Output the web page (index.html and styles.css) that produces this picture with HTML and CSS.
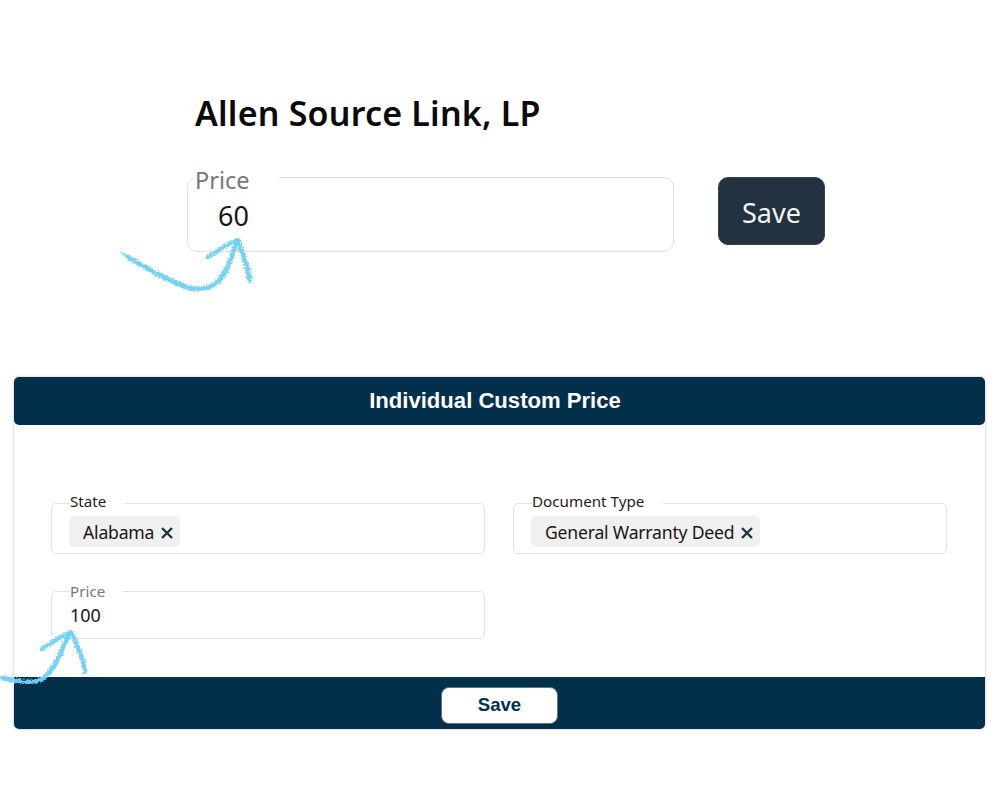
FILE: index.html
```html
<!DOCTYPE html>
<html lang="en">
<head>
<meta charset="utf-8">
<title>Custom Price</title>
<link rel="stylesheet" href="styles.css">
</head>
<body>
<div class="page">
  <section class="top">
    <h1 class="company">Allen Source Link, LP</h1>
    <div class="top-row">
      <fieldset class="big-field">
        <legend class="big-legend">Price</legend>
        <span class="big-value">60</span>
      </fieldset>
      <button class="big-save" type="button">Save</button>
    </div>
  </section>
  <section class="card">
    <header class="card-head">Individual Custom Price</header>
    <div class="card-body">
      <fieldset class="field">
        <legend class="legend">State</legend>
        <span class="chip">Alabama
          <svg class="chip-x" viewBox="0 0 12 12"><path d="M1 1L11 11M11 1L1 11"/></svg>
        </span>
      </fieldset>
      <fieldset class="field">
        <legend class="legend">Document Type</legend>
        <span class="chip">General Warranty Deed
          <svg class="chip-x" viewBox="0 0 12 12"><path d="M1 1L11 11M11 1L1 11"/></svg>
        </span>
      </fieldset>
      <fieldset class="field price-field">
        <legend class="legend muted">Price</legend>
        <span class="price-value">100</span>
      </fieldset>
    </div>
    <footer class="card-foot"><button class="foot-save" type="button">Save</button></footer>
  </section>
  <svg class="arrows" viewBox="0 0 1000 800" width="1000" height="800">
    <defs>
      <filter id="chalk" x="-10%" y="-10%" width="120%" height="120%">
        <feTurbulence type="fractalNoise" baseFrequency="0.6" numOctaves="3" seed="7" result="n"/>
        <feDisplacementMap in="SourceGraphic" in2="n" scale="5" xChannelSelector="R" yChannelSelector="G"/>
      </filter>
    </defs>
    <g class="arrow" filter="url(#chalk)">
      <path class="a-thin" d="M122 253C140 265 158 275 176 284C190 290 204 292 216 285C228 276 232 258 238 240"/>
      <path class="a-thick" d="M128 257C146 268 166 279 182 285C194 290 206 290 216 283C226 274 231 258 237 241"/>
      <path class="a-thick" d="M208 257C218 250 228 244 238 240C242 254 247 266 250 281"/>
      <path class="a-thin" d="M238 241C243 252 249 268 251 279"/>
      <path class="a-thin" d="M0 677C14 680 26 684 38 681C52 676 58 664 70 632"/>
      <path class="a-thick" d="M3 678C16 681 30 684 40 680C52 675 60 652 70 633"/>
      <path class="a-thick" d="M42 649C52 642 62 636 71 632C77 645 83 658 85 672"/>
      <path class="a-thin" d="M72 633C78 645 84 660 86 671"/>
    </g>
  </svg>
</div>
</body>
</html>
```
FILE: styles.css
```css
* { box-sizing: border-box; }
html, body { margin: 0; padding: 0; background: #fff; }
.page {
  position: relative;
  width: 1000px;
  height: 800px;
  overflow: hidden;
  font-family: "Noto Sans", "Open Sans", sans-serif;
  color: #1a1614;
}
.top { padding: 91px 0 0 187px; height: 377px; }
.company {
  margin: 0 0 42px 8px;
  font-size: 34px;
  line-height: 44px;
  font-weight: 600;
  color: #0c0a0a;
  letter-spacing: 0.2px;
}
.top-row { display: flex; align-items: flex-start; gap: 44px; }
.big-field {
  width: 487px;
  height: 93px;
  margin: -18px 0 0;
  padding: 0 0 0 31px;
  border: 1px solid #e0e0e0;
  border-radius: 10px;
  min-width: 0;
}
.big-legend {
  margin-left: -24px;
  padding: 6px 29px 0 0;
  font-size: 23.5px;
  line-height: 30px;
  color: #7a7674;
}
.big-value { display: block; font-size: 27px; line-height: 36px; margin: 3px 0 0 -1px; }
.big-save {
  width: 107px;
  height: 68px;
  border: 1px solid #2f4451;
  border-radius: 10px;
  background: #22333f;
  color: #f2f4f5;
  font: 27px/1 "Noto Sans", "Open Sans", sans-serif;
  padding: 2px 0 0;
}
.card {
  margin: 0 14px;
  width: 971px;
  height: 352px;
  display: flex;
  flex-direction: column;
  box-shadow: 0 0 3px rgba(0, 0, 0, 0.28);
  border-radius: 5px;
  background: #fff;
}
.card-head {
  height: 48px;
  background: #02304a;
  border-radius: 5px;
  color: #fff;
  font: 700 22.1px/48px "Liberation Sans", Arial, sans-serif;
  text-align: center;
  flex: none;
  padding-right: 9px;
}
.card-body {
  flex: 1;
  display: grid;
  grid-template-columns: 434px 434px;
  column-gap: 28px;
  row-gap: 27px;
  align-content: start;
  padding: 66px 37px 0;
}
.field {
  margin: 0;
  min-width: 0;
  height: 63px;
  padding: 0 0 0 17px;
  border: 1px solid #e2e2e2;
  border-radius: 5px;
}
.legend {
  margin-left: 1px;
  padding: 0 19px 4px 0;
  font-size: 15.2px;
  line-height: 20px;
  color: #1f1c1a;
}
.muted { color: #7a7674; padding: 0 17px 0 0; }
.chip {
  display: inline-flex;
  align-items: center;
  gap: 7px;
  height: 31px;
  padding: 0 7px 0 14px;
  background: #f0f0f0;
  border-radius: 5px;
  font-size: 17.6px;
  letter-spacing: -0.2px;
  margin-top: 1px;
}
.chip-x { width: 12px; height: 12px; flex: none; margin-top: 2px; }
.chip-x path { stroke: #1f3442; stroke-width: 2.4; fill: none; }
.price-field { height: 58px; }
.price-value { display: block; font-size: 18px; line-height: 24px; margin: 2px 0 0 1px; }
.card-foot {
  height: 52px;
  flex: none;
  background: #02304a;
  border-radius: 0 0 5px 5px;
  display: flex;
  justify-content: center;
  padding: 10px 0 0;
}
.foot-save {
  width: 117px;
  height: 37px;
  border: 1px solid #5c7686;
  border-radius: 8px;
  background: #fff;
  color: #02304a;
  font: 700 18.6px/1 "Liberation Sans", Arial, sans-serif;
  padding: 0;
}
.arrows { position: absolute; top: 0; left: 0; pointer-events: none; }
.arrow path { fill: none; stroke: #6fd0f5; stroke-linecap: round; stroke-linejoin: round; }
.a-thin { stroke-width: 3; opacity: 0.75; }
.a-thick { stroke-width: 4.4; opacity: 0.9; }
```
